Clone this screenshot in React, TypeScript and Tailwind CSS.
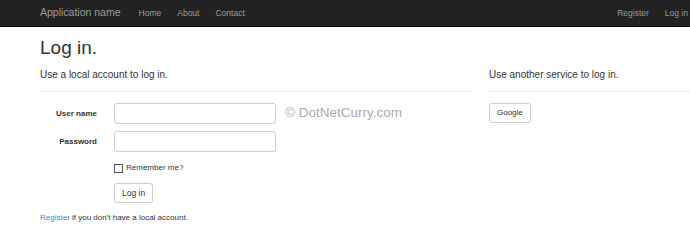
export default function App() {
  return (
    <div className="min-h-screen bg-white font-['Liberation_Sans',Arial,sans-serif] text-[#333]">
      <nav className="h-[27px] bg-[#222] border-b border-[#080808] flex items-center pl-[40px] pr-[2px] text-[#9d9d9d]">
        <span className="text-[10.5px] mr-[18px]">Application name</span>
        <div className="flex gap-[16px] text-[8.5px]">
          <span>Home</span>
          <span>About</span>
          <span>Contact</span>
        </div>
        <div className="ml-auto flex gap-[16px] text-[8.5px]">
          <span>Register</span>
          <span>Log in</span>
        </div>
      </nav>

      <div className="pl-[40px]">
        <h1 className="text-[19px] leading-none text-[#333] pt-[11px]">Log in.</h1>
        <div className="flex mt-[13px]">
          <section className="w-[432px]">
            <h4 className="text-[10px] leading-none pb-[11px] border-b border-[#eee]">
              Use a local account to log in.
            </h4>
            <div className="mt-[11px] flex flex-col">
              <div className="flex items-center">
                <label className="w-[57px] text-right text-[8px] font-bold">User name</label>
                <input className="ml-[17px] w-[162px] h-[21px] border border-[#ccc] rounded-[3px]" />
                <span className="ml-[9px] text-[13.5px] text-[#aaa]">© DotNetCurry.com</span>
              </div>
              <div className="flex items-center mt-[7px]">
                <label className="w-[57px] text-right text-[8px] font-bold">Password</label>
                <input type="password" className="ml-[17px] w-[162px] h-[21px] border border-[#ccc] rounded-[3px]" />
              </div>
              <div className="flex items-center mt-[10px] ml-[74px]">
                <span className="w-[9px] h-[9px] border border-[#555] bg-white" />
                <span className="ml-[3px] text-[8px]">Remember me?</span>
              </div>
              <div className="mt-[5px] ml-[74px]">
                <button className="h-[20px] px-[7px] border border-[#ccc] rounded-[3px] text-[8.5px] bg-white">
                  Log in
                </button>
              </div>
            </div>
            <p className="mt-[9px] text-[8px]">
              <span className="text-[#428bca]">Register</span> if you don't have a local account.
            </p>
          </section>
          <section className="ml-[17px] flex-1">
            <h4 className="text-[10px] leading-none pb-[11px] border-b border-[#eee]">
              Use another service to log in.
            </h4>
            <button className="mt-[11px] h-[20px] px-[7px] border border-[#ccc] rounded-[3px] text-[8px] bg-white">
              Google
            </button>
          </section>
        </div>
      </div>
    </div>
  );
}
